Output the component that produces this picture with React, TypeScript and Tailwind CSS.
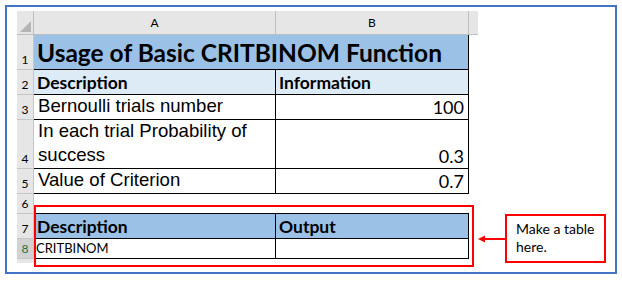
import React from 'react';

const calibri = "font-['Lato','Noto_Sans',sans-serif]";
const arial = "font-['Liberation_Sans',Arial,sans-serif]";

const RowNum = ({ n, h, active }: { n: string; h: string; active?: boolean }) => (
  <div
    className={`${h} w-[17px] shrink-0 border-b border-r border-[#c6c6c6] ${active ? 'bg-[#d2d2d2] text-[#217346]' : 'bg-[#e6e6e6] text-black'} ${calibri} text-[12px] leading-none flex items-end justify-center pb-[3px]`}
  >
    {n}
  </div>
);

export default function App() {
  return (
    <div className="w-[622px] h-[283px] bg-white p-[5px]">
      <div className="relative w-full h-[269px] border-2 border-[#4472c4] pl-[10px] pt-[4px]">
        {/* sheet */}
        <div className="flex flex-col w-[461px]">
          {/* column header */}
          <div className={`flex h-[24px] bg-[#e6e6e6] ${calibri} text-[12px] text-black`}>
            <div className="w-[17px] border-r border-b border-[#bfbfbf] relative">
              <div className="absolute right-[2px] bottom-[2px] w-0 h-0 border-l-[11px] border-l-transparent border-b-[11px] border-b-[#b4b4b4]" />
            </div>
            <div className="w-[242px] border-r border-b border-[#bfbfbf] flex items-center justify-center">A</div>
            <div className="w-[193px] border-r border-b border-[#bfbfbf] flex items-center justify-center">B</div>
            <div className="w-[9px] border-b border-[#bfbfbf]" />
          </div>

          {/* row 1 */}
          <div className="flex">
            <RowNum n="1" h="h-[35px]" />
            <div className={`w-[435px] h-[35px] bg-[#9bc2e6] border-b border-r border-black ${calibri} font-bold text-[24.5px] leading-none flex items-center pl-[3px] pt-[2px] whitespace-nowrap`}>
              Usage of Basic CRITBINOM Function
            </div>
          </div>

          {/* row 2 */}
          <div className="flex">
            <RowNum n="2" h="h-[25px]" />
            <div className={`w-[242px] h-[25px] bg-[#ddebf7] border-b border-r border-black ${calibri} font-bold text-[17.5px] leading-none flex items-end pb-[3px] pl-[3px]`}>
              Description
            </div>
            <div className={`w-[193px] h-[25px] bg-[#ddebf7] border-b border-r border-black ${calibri} font-bold text-[17.5px] leading-none flex items-end pb-[3px] pl-[3px]`}>
              Information
            </div>
          </div>

          {/* row 3 */}
          <div className="flex">
            <RowNum n="3" h="h-[25px]" />
            <div className={`w-[242px] h-[25px] border-b border-r border-black ${arial} text-[18.6px] leading-none flex items-end pb-[3px] pl-[4px] whitespace-nowrap`}>
              Bernoulli trials number
            </div>
            <div className={`w-[193px] h-[25px] border-b border-r border-black ${calibri} text-[18px] leading-none flex items-end justify-end pb-[3px] pr-[4px]`}>
              100
            </div>
          </div>

          {/* row 4 */}
          <div className="flex">
            <RowNum n="4" h="h-[49px]" />
            <div className={`w-[242px] h-[49px] border-b border-r border-black ${arial} text-[18.6px] leading-[24px] flex items-end pb-[1px] pl-[4px] whitespace-nowrap`}>
              <span>
                In each trial Probability of
                <br />
                success
              </span>
            </div>
            <div className={`w-[193px] h-[49px] border-b border-r border-black ${calibri} text-[18px] leading-none flex items-end justify-end pb-[3px] pr-[4px]`}>
              0.3
            </div>
          </div>

          {/* row 5 */}
          <div className="flex">
            <RowNum n="5" h="h-[25px]" />
            <div className={`w-[242px] h-[25px] border-b border-r border-black ${arial} text-[18.6px] leading-none flex items-end pb-[3px] pl-[4px] whitespace-nowrap`}>
              Value of Criterion
            </div>
            <div className={`w-[193px] h-[25px] border-b border-r border-black ${calibri} text-[18px] leading-none flex items-end justify-end pb-[3px] pr-[4px]`}>
              0.7
            </div>
          </div>

          {/* row 6 */}
          <div className="flex">
            <RowNum n="6" h="h-[20px]" />
            <div className="w-[435px] h-[20px] border-b border-black" />
          </div>

          {/* row 7 */}
          <div className="flex">
            <RowNum n="7" h="h-[25px]" />
            <div className={`w-[242px] h-[25px] bg-[#9bc2e6] border-b border-r border-black ${calibri} font-bold text-[17.5px] leading-none flex items-end pb-[3px] pl-[3px]`}>
              Description
            </div>
            <div className={`w-[193px] h-[25px] bg-[#9bc2e6] border-b border-r border-black ${calibri} font-bold text-[17.5px] leading-none flex items-end pb-[3px] pl-[3px]`}>
              Output
            </div>
          </div>

          {/* row 8 */}
          <div className="flex">
            <RowNum n="8" h="h-[20px]" active />
            <div className={`w-[242px] h-[20px] border-b border-r border-black ${calibri} text-[13px] leading-none flex items-end pb-[3px] pl-[2px]`}>
              CRITBINOM
            </div>
            <div className="w-[193px] h-[20px] border-b border-r border-black" />
          </div>

          <div className="flex">
            <div className="w-[17px] h-[4px] bg-[#e6e6e6]" />
          </div>
        </div>

        {/* annotation: red box around the new table */}
        <div className="absolute left-[27px] top-[198px] w-[440px] h-[62px] border-2 border-[#ff0000]" />

        {/* arrow */}
        <div className="absolute left-[471px] top-[226px] w-[27px] h-[12px]">
          <svg width="27" height="12" viewBox="0 0 27 12">
            <line x1="5" y1="6" x2="27" y2="6" stroke="#ff0000" strokeWidth="2" />
            <polygon points="0,6 7,2.5 7,9.5" fill="#ff0000" />
          </svg>
        </div>

        {/* callout */}
        <div className={`absolute left-[498px] top-[207px] w-[101px] h-[49px] border-2 border-[#ff0000] bg-white ${calibri} text-[14px] leading-[18px] text-black pl-[9px] pt-[4px]`}>
          Make a table
          <br />
          here.
        </div>
      </div>
    </div>
  );
}
